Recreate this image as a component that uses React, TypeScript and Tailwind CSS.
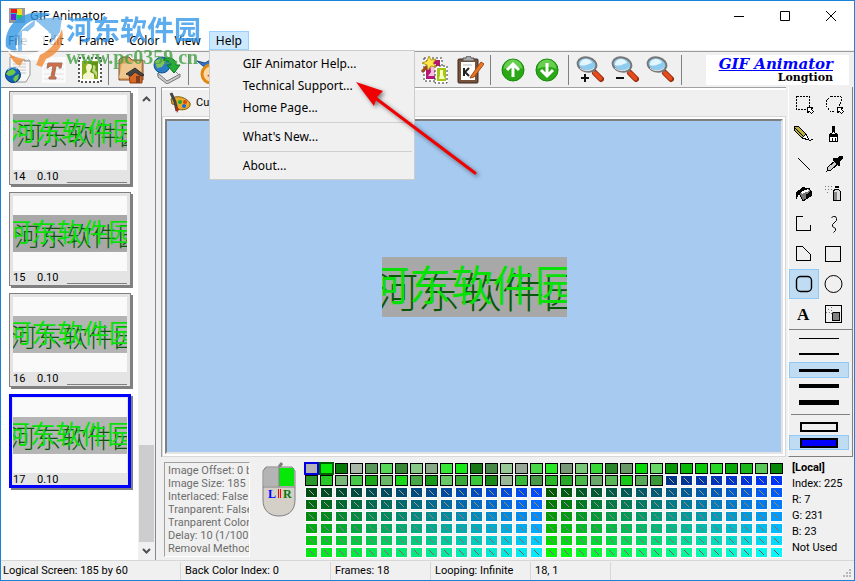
import type { ReactNode } from "react";

const UI = "font-['Noto_Sans','Noto_Sans_CJK_SC',sans-serif]";
const SMALL = "font-['Roboto',sans-serif] text-[11px]";

const frames = [
  { id: 14, green: -6, dark: 5, bg: "#a8a8a8" },
  { id: 15, green: -13, dark: 2, bg: "#a8a8a8" },
  { id: 16, green: -12, dark: -4, bg: "#b4b4b4" },
  { id: 17, green: -15, dark: -6, bg: "#b4b4b4" },
];

const info = [
  "Image Offset: 0 by 0",
  "Image Size: 185 by 60",
  "Interlaced: False",
  "Tranparent: False",
  "Tranparent Color: 0",
  "Delay: 10 (1/100 s)",
  "Removal Method: 0",
];

const usedColors = (
  "b4b4b4 08e808 087808 a8b8a8 589858 58d858 388838 88c888 88a888 38e838 18e818 187818 488848 98c898 98a898 48d848 " +
  "28e828 789878 78c878 38d838 288828 689868 08d808 68d868 089808 08b808 08c808 28d828 08a808 18b818 58c858 088808 " +
  "289828 28c828 78b878 48c848 18a818 68b868 18d818 48a848 189818 68c868 38a838 38c838 188818 98b898 38b838 489848 " +
  "28b828 28a828 48b848 68a868 58b858 18c818 58a858 389838"
).split(" ");

function swatch(i: number) {
  if (i < usedColors.length) {
    return { fill: "#" + usedColors[i], line: "" };
  }
  const row = Math.floor(i / 32);
  const col = i % 32;
  let g = 52;
  let b = 136 + (col - 24) * 17;
  if (row > 1) {
    g = 75 + (row - 2) * 32 + (col > 15 ? 16 : 0);
    b = col > 15 ? (col - 16) * 17 : 15 + col * 16;
  }
  g = Math.min(g, 255);
  return {
    fill: `rgb(0,${g},${b})`,
    line: `rgb(225,${255 - g},${255 - b})`,
  };
}

function FrameArt({ green, dark, bg }: { green: number; dark: number; bg: string }) {
  return (
    <svg viewBox="0 0 185 60" className="block w-full font-['Noto_Sans_CJK_SC',sans-serif]">
      <rect width="185" height="60" fill={bg} />
      <text x={dark} y="51" fontSize="42" fontWeight="300" fill="#085808">
        河东软件园
      </text>
      <text x={green} y="44" fontSize="42" fontWeight="400" fill="#08e008">
        河东软件园
      </text>
    </svg>
  );
}

function FrameCard({ frame }: { frame: (typeof frames)[number] }) {
  const selected = frame.id === 17;
  return (
    <button
      className={`relative block w-[122px] h-[94px] shrink-0 bg-[#e4e4e4] text-left shadow-[2px_2px_0_#808080] border ${
        selected ? "border-[#0000ff] outline-3 -outline-offset-3 outline-[#0000ff]" : "border-[#808080]"
      }`}
    >
      <div className="mx-[3px] mt-[3px] h-[75px] flex items-center bg-[#fafafa]">
        <FrameArt green={frame.green} dark={frame.dark} bg={frame.bg} />
      </div>
      <div className={`flex items-center px-[3px] h-[14px] leading-[14px] ${SMALL}`}>
        <span className="w-6">{frame.id}</span>
        <span className="w-[30px]">0.10</span>
        {!selected && <span className="flex-1 self-end mb-px border-b border-[#808080]" />}
      </div>
    </button>
  );
}

function Icon({ children, label }: { children: ReactNode; label: string }) {
  return (
    <button aria-label={label} className="shrink-0">
      <svg width="28" height="28" viewBox="0 0 28 28" fill="none">
        {children}
      </svg>
    </button>
  );
}

function Sep() {
  return <span className="w-px h-[30px] shrink-0 bg-[#808080]" />;
}

function Lens() {
  return (
    <>
      <path d="M19 17l6 6" stroke="#922a0c" strokeWidth="6" strokeLinecap="round" />
      <path d="M19 17l5.500 5.500" stroke="#e64a1d" strokeWidth="4" strokeLinecap="round" />
      <path d="M15 13l3 3" stroke="#777" strokeWidth="3" />
      <ellipse cx="11" cy="8.500" rx="9.500" ry="7" fill="#8dccef" stroke="#777" strokeWidth="2" transform="rotate(15 11 8.500)" />
      <path d="M4 9c0-7 10-8 12-2-3 0-6 4-12 2z" fill="#e3f6ff" />
      <path d="M4 12c3 3 10 4 14 0" stroke="#e7e7e7" />
    </>
  );
}

function Arrow({ down }: { down?: boolean }) {
  return (
    <>
      <circle cx="14" cy="14" r="11" fill="#2aa816" stroke="#168a0b" />
      <path d="M4.500 13a9.500 9.500 0 0 1 19 0c-5-3-13-3-19 0z" fill="#69ce50" />
      <path
        d={down ? "M14 7v13M8 14l6 6 6-6" : "M14 21V8M8 14l6-6 6 6"}
        stroke="#fff"
        strokeWidth="3"
      />
    </>
  );
}

function Toolbar() {
  return (
    <div className="flex items-center h-9 pl-[3px] pr-[5px] border-t border-[#9a9a9a] bg-[#f0f0f0] overflow-hidden">
      <div className="flex items-center gap-2 w-[104px] shrink-0">
        <Icon label="Open from web">
          <path d="M6 1h16l4 4v14l-4 7H6z" fill="#f8f8f8" stroke="#999" />
          <path d="M9 5h10M9 8h13M9 11h13M14 14h8M17 17h5" stroke="#c6c6c6" />
          <path d="M25 5h-5V1" fill="#ddd" stroke="#888" />
          <circle cx="9" cy="19" r="7.500" fill="#1763b5" stroke="#063d79" />
          <path d="M4 15l5-2 3 3-3 3-4 1-3-2zM11 20l4-2-1 5-3 3-2-3z" fill="#6ec84a" />
          <path d="M4 14c2-3 6-3 9-1" stroke="#a7dcff" />
        </Icon>
        <Icon label="Text">
          <rect x="2" y="1" width="24" height="26" fill="#fafafa" />
          <path d="M4 8h20M4 13h20M4 18h20M4 23h20" stroke="#e2e2e2" />
          <path d="M8 7h14l-1 5h-2v-2h-3l-2 11h2v2H9v-2h2l2-11h-3l-2 2H7z" fill="#d66c46" stroke="#a0705c" />
        </Icon>
        <Icon label="Image">
          <rect x="3" y="2" width="22" height="24" fill="#fff" stroke="#555" strokeWidth="2" strokeDasharray="2 2" />
          <rect x="4" y="3" width="20" height="22" fill="#fff" />
          <rect x="6" y="5" width="16" height="18" fill="#87ad1d" />
          <path d="M12 6h10v14H12z" fill="#5f9512" />
          <path d="M12 8c4-1 5 3 3 5l-1 3 4 2v5H7v-4l4-3-1-4c0-2 0-3 2-4z" fill="#f4f6cf" />
          <path d="M17 9c3 0 3 3 2 5l2 2v5l-3-4-2-2 1-3z" fill="#c6d982" />
        </Icon>
      </div>
      <Sep />
      <div className="flex items-center gap-2 px-2 w-[79px] shrink-0">
        <Icon label="Open">
          <path d="M2 24V4l3-3h7l3 3h11v20z" fill="#dfa160" stroke="#7d5129" />
          <path d="M5 8l19-3v17H2z" fill="#edc78d" />
          <path d="M12 18l6-5 9 6-2 2v6H13z" fill="#d86823" stroke="#8d3c18" />
          <path d="M9 18l9-6 9 7-3 1-6-4-4 4z" fill="#444" stroke="#333" />
          <path d="M19 20h4v7h-4z" fill="#81401d" />
        </Icon>
        <Icon label="Save">
          <path d="M5 17l13-6 9 9-13 7-9-7z" fill="#f0f0f0" stroke="#888" />
          <path d="M5 17v4l9 7 13-7v-3l-13 7z" stroke="#777" fill="#ccc" />
          <circle cx="9" cy="9" r="8" fill="#287bc4" stroke="#115493" />
          <path d="M2 5l6-3 5 3-4 6-5 1z" fill="#80c35a" />
          <path d="M11 3c6-3 12 0 12 6h4l-6 8-7-8h4c0-3-3-5-7-4z" fill="#25ae35" stroke="#08791c" />
        </Icon>
      </div>
      <Sep />
      <div className="px-2 flex-1 flex">
        <Icon label="Browser preview">
          <path d="M0 5l8 2 7-4-3 9-6-2z" fill="#3576c8" stroke="#154885" />
          <circle cx="14" cy="18" r="9" fill="#ffd9a3" stroke="#df8911" strokeWidth="3" />
          <path d="M10 20l9-7-5 8z" fill="#d33" />
        </Icon>
      </div>
      <div className="flex items-center gap-2 mr-[6px] shrink-0">
        <Icon label="Effects">
          <rect x="5" y="3" width="16" height="21" fill="#b31873" stroke="#fff" strokeWidth="2" />
          <rect x="4" y="2" width="18" height="23" stroke="#333" strokeDasharray="2 2" />
          <path d="M10 8h6v6l-2 2 4 4H8l3-4z" fill="#f4c1df" />
          <rect x="16" y="11" width="11" height="15" fill="#a5c714" stroke="#fff" strokeWidth="2" />
          <rect x="15" y="10" width="12" height="17" stroke="#333" strokeDasharray="2 2" />
          <path d="M20 14h3v5l2 4h-6l1-4z" fill="#f7ffc4" />
          <path d="M2 16l8-9" stroke="#9a4c17" strokeWidth="3" />
          <path d="M9 0l2 4 5-1-3 4 3 4-5-1-3 4-1-5-5-2 5-2z" fill="#ffe74e" stroke="#b49a16" />
        </Icon>
        <Icon label="Properties">
          <rect x="2" y="3" width="20" height="24" rx="1" fill="#775239" stroke="#3d2b22" />
          <path d="M5 6h14v18H5z" fill="#fff" />
          <path d="M7 5V2h3l1-2h3l1 2h3v3z" fill="#aaa" stroke="#555" />
          <path d="M7 9h9" stroke="#bbb" />
          <path d="M8 12v8M13 12l-4 4 4 4" stroke="#222" strokeWidth="2" />
          <path d="M15 20l10-14 3 2-10 13-4 1z" fill="#e97728" stroke="#a64815" />
        </Icon>
      </div>
      <Sep />
      <div className="flex items-center justify-center gap-[6px] w-[77px] shrink-0">
        <Icon label="Move up">
          <Arrow />
        </Icon>
        <Icon label="Move down">
          <Arrow down />
        </Icon>
      </div>
      <Sep />
      <div className="flex items-center gap-[7px] pl-[7px] w-[112px] shrink-0">
        <Icon label="Zoom in">
          <Lens />
          <path d="M5 22h8M9 18v8" stroke="#111" strokeWidth="2" />
        </Icon>
        <Icon label="Zoom out">
          <Lens />
          <path d="M5 22h8" stroke="#111" strokeWidth="2" />
        </Icon>
        <Icon label="Zoom">
          <Lens />
        </Icon>
      </div>
      <Sep />
      <div className="ml-6 w-[143px] h-[30px] shrink-0 bg-white pr-4 text-right font-['DejaVu_Serif',serif] font-bold">
        <a href="#home" className="block text-[15px] leading-[18px] italic underline text-[#0000ff] whitespace-nowrap">
          GIF Animator
        </a>
        <div className="text-[11px] leading-[10px]">Longtion</div>
      </div>
    </div>
  );
}

const tools: { name: string; art: ReactNode }[] = [
  {
    name: "Select",
    art: (
      <>
        <path d="M7.500 7.500h13v13h-13z" strokeDasharray="2 1" />
        <path d="M18.500 18.500h5l-1 2 2 2-2 2-2-2-2 1z" fill="#fff" />
      </>
    ),
  },
  {
    name: "Lasso",
    art: (
      <>
        <path d="M12 7h5l5 1v5l-2 4M12 7l-5 5v5l4 5 6 1" strokeDasharray="2 1" />
        <path d="M18.500 18.500h5l-1 2 2 2-2 2-2-2-2 1z" fill="#fff" />
      </>
    ),
  },
  {
    name: "Pencil",
    art: (
      <>
        <path d="M5 7l4 0 8 8-4 4-8-8z" fill="#b7af42" />
        <path d="M13 19l4-4 3 6z" fill="#fff" />
        <path d="M20 21h2l2-1M6 9l9 9" />
      </>
    ),
  },
  {
    name: "Brush",
    art: (
      <>
        <path d="M13.500 13.500v-6h2v6l3 2v7h-8v-7z" fill="#fff" />
        <path d="M11 15h7v2h-7z" fill="#000" />
        <path d="M13.500 19v3M16.500 19v3M14.500 7v6" />
      </>
    ),
  },
  { name: "Line", art: <path d="M9 9l12 12" strokeWidth="1.400" /> },
  {
    name: "Color picker",
    art: (
      <>
        <path d="M8 22l1-4 8-7 3 3-8 7z" fill="#ccc" />
        <path d="M15 9l4 1 2-3h2v3l-3 3v3h-1l-5-5z" fill="#000" />
      </>
    ),
  },
  {
    name: "Fill",
    art: (
      <>
        <path d="M12 12l8-3 3 7-9 6-4-8z" fill="#777" />
        <path d="M7 20v-6l4-3 3-3 4 2-8 4z" fill="#000" />
        <path d="M12 13l7-3 1 2-7 3z" fill="#fff" stroke="none" />
        <path d="M17 16l5-3v4l-5 3z" fill="#111" />
      </>
    ),
  },
  {
    name: "Spray",
    art: (
      <>
        <path d="M14.500 12.500l1-2h4l2 2v9h-7z" fill="#ddd" />
        <path d="M15 13h3v8h-3z" fill="#888" stroke="none" />
        <path d="M16 9V7h3v2" fill="#000" />
        <path d="M6 7h8M6 10h7M8 13h3" strokeDasharray="1 2" stroke="#777" />
      </>
    ),
  },
  { name: "Polyline", art: <path d="M14 7.500H7.500v14h14V16" /> },
  { name: "Curve", art: <path d="M12.500 8.500l2-1h2l1 2v2l-4 4v2l3 2v2l-2 2" shapeRendering="auto" /> },
  { name: "Polygon", art: <path d="M7.500 7.500h6l8 8v6h-14z" /> },
  { name: "Rectangle", art: <path d="M6.500 7.500h15v15h-15z" /> },
  { name: "Rounded rectangle", art: <rect x="7.500" y="7.500" width="15" height="15" rx="4" strokeWidth="1.400" shapeRendering="auto" /> },
  { name: "Ellipse", art: <circle cx="14.500" cy="15" r="8.500" shapeRendering="auto" /> },
  {
    name: "Text tool",
    art: (
      <text x="8" y="21" fontSize="17" fontWeight="bold" fill="#000" stroke="none" className="font-['Liberation_Serif',serif]">
        A
      </text>
    ),
  },
  {
    name: "Transparency",
    art: (
      <>
        <path d="M6.500 6.500h16v17h-16z" />
        <path d="M13.500 13.500h7v8h-7z" fill="#808080" />
        <path d="M7 13h7M12 8v7M9 10h2" stroke="#777" strokeDasharray="1 2" />
      </>
    ),
  },
];

const strokes = ["h-px", "h-[2px]", "h-[3px]", "h-1", "h-[5px]"];

function ToolPanel() {
  return (
    <div className="w-[65px] shrink-0 border-l border-white border-r border-r-[#808080] border-b border-b-[#808080] pt-[2px] flex flex-col">
      <div className="grid grid-cols-[30px_30px]">
        {tools.map((tool) => (
          <button
            key={tool.name}
            aria-label={tool.name}
            className={`h-[30px] ${
              tool.name === "Rounded rectangle" ? "bg-[#bfdcf3] outline outline-[#90c8f6] -outline-offset-1" : ""
            }`}
          >
            <svg width="30" height="30" viewBox="0 0 30 30" fill="none" stroke="#000" shapeRendering="crispEdges">
              {tool.art}
            </svg>
          </button>
        ))}
      </div>
      <div className="border-t border-[#808080]">
        {strokes.map((h, i) => (
          <button
            key={h}
            aria-label={`Line width ${i + 1}`}
            className={`flex w-[60px] h-4 items-center justify-center border ${
              i === 2 ? "bg-[#bfdcf3] border-[#90c8f6]" : "border-transparent"
            }`}
          >
            <span className={`w-10 bg-black ${h}`} />
          </button>
        ))}
      </div>
      <div className="mt-1 mx-[2px] border-t border-[#808080]" />
      <div className="pt-1">
        <button aria-label="Outline" className="flex w-[60px] h-4 items-center justify-center">
          <span className="w-[38px] h-[10px] border-2 border-black" />
        </button>
        <button aria-label="Filled" className="flex w-[60px] h-[15px] items-center justify-center bg-[#bfdcf3] border border-[#90c8f6]">
          <span className="w-[38px] h-[10px] border-2 border-black bg-[#0000ff]" />
        </button>
      </div>
    </div>
  );
}

function Palette() {
  return (
    <div className="grid grid-cols-[repeat(32,15px)] auto-rows-[12px] content-start shrink-0">
      {Array.from({ length: 256 }, (_, i) => {
        const c = swatch(i);
        let ring = c.line ? "border-white" : "border-black";
        if (i === 0) ring = "border-black outline-2 outline-[#0000e0]";
        if (i === 1) ring = "border-black outline-2 outline-[#006000]";
        return (
          <button
            key={i}
            aria-label={`Color ${i}`}
            className={`m-px h-[11px] w-[13px] border ${ring} ${i < 2 ? "z-10 -outline-offset-1" : ""}`}
            style={{ backgroundColor: c.fill }}
          >
            {c.line && (
              <svg className="block" width="11" height="9" viewBox="0 0 11 9">
                <path d="M3 2l5 5" stroke={c.line} strokeWidth="0.800" />
              </svg>
            )}
          </button>
        );
      })}
    </div>
  );
}

function Mouse() {
  return (
    <svg width="34" height="56" viewBox="0 0 34 56" className="shrink-0 font-['Liberation_Serif',serif]">
      <path d="M17 5l3-4" stroke="#808080" strokeWidth="3" />
      <path d="M4 5h26l3 4v29c0 11-7 16-16 16S1 49 1 38V9z" fill="#d4d0c8" />
      <path d="M2 6h15v18H2z" fill="#b4b4b4" />
      <path d="M17 6h15v18H17z" fill="#08e808" />
      <path d="M4 5h26l3 4v29c0 11-7 16-16 16S1 49 1 38V9zM1 25h32M17 5v20" fill="none" stroke="#808080" />
      <text x="6" y="36" fontSize="12" fontWeight="bold" fill="#0000ff">L</text>
      <path d="M16.500 27v9M18.500 27v9" stroke="#f00" />
      <text x="21" y="36" fontSize="12" fontWeight="bold" fill="#087808">R</text>
    </svg>
  );
}

function HelpMenu() {
  const item = "block w-full h-[22px] pl-[33px] text-left leading-[22px] whitespace-nowrap";
  const line = <div className="h-[7px] pt-[3px] pl-[30px] pr-[2px]"><div className="border-t border-[#d0d0d0]" /></div>;
  return (
    <div className="absolute z-20 left-0 top-full w-[206px] py-[2px] bg-[#f0f0f0] border border-[#cccccc]">
      <button className={item}>GIF Animator Help...</button>
      <button className={item}>Technical Support...</button>
      <button className={item}>Home Page...</button>
      {line}
      <button className={item}>What's New...</button>
      {line}
      <button className={item}>About...</button>
    </div>
  );
}

function Watermark() {
  return (
    <div className="absolute z-10 left-1 top-[10px] flex items-start opacity-80 pointer-events-none">
      <svg width="58" height="58" viewBox="0 0 58 58">
        <path d="M2 38c14 12 36 6 51-16l4-3c1 16-8 27-20 31L19 48C10 47 4 43 2 38z" fill="#fff" />
        <path d="M1 36C-2 14 18-4 46 3L30 9C20 11 13 20 12 31l-2 8z" fill="#3498e5" />
        <path d="M2 37c3 2 7 3 10 2l-2-4c0-6 2-10 3-14z" fill="#3498e5" />
        <path d="M13 22l18-14 26-2-2 15-9 11V23l-3-2-10-9-11 9v18l-9 1z" fill="#70b3ea" />
        <path d="M17 20h5v20h-5zM30 9l14 12h-4v11l-7 5V23h-4z" fill="#fff" />
        <path d="M4 42c4 4 10 5 15 6l-4 7C10 53 6 48 4 42z" fill="#f28a36" />
        <path d="M57 18c3 14-3 25-16 30l-4 8-6-2 4-10c9-4 17-12 22-26z" fill="#f28a36" />
      </svg>
      <div className="pl-[3px]">
        <div className="text-[27px] leading-[36px] font-bold text-[#3498eb] font-['Noto_Sans_CJK_SC',sans-serif]">
          河东软件园
        </div>
        <div className="text-[20px] leading-[20px] font-bold text-[#46a046] font-['Liberation_Serif',serif]">
          www.pc0359.cn
        </div>
      </div>
    </div>
  );
}

export default function App() {
  return (
    <div className={`relative flex flex-col min-h-screen border border-[#1883d7] bg-[#f0f0f0] text-black text-[12px] ${UI}`}>
      <header className="flex items-center h-[30px] bg-white pl-2">
        <svg width="16" height="16" viewBox="0 0 16 16">
          <path d="M0 0h16v15H0z" fill="#999" />
          <path d="M2 1h11v11H2z" fill="#10b9e5" />
          <path d="M2 1h6v4H2z" fill="#ef1717" />
          <path d="M8 1h5v6H8z" fill="#f0dc20" />
          <path d="M2 6h5v6H2z" fill="#6127dc" />
          <path d="M8 7h5v5H8z" fill="#24ca42" />
        </svg>
        <h1 className="ml-[5px] flex-1">GIF Animator</h1>
        <button aria-label="Minimize" className="w-[46px] flex justify-center">
          <svg width="10" height="10" stroke="#000"><path d="M0 5.500h10" /></svg>
        </button>
        <button aria-label="Maximize" className="w-[46px] flex justify-center">
          <svg width="10" height="10" fill="none" stroke="#000"><path d="M.5.5h9v9h-9z" /></svg>
        </button>
        <button aria-label="Close" className="w-[46px] flex justify-center">
          <svg width="10" height="10" stroke="#000"><path d="M0 0l10 10M10 0L0 10" /></svg>
        </button>
      </header>

      <nav className="flex gap-px h-5 bg-white border-b border-[#f0f0f0]">
        {["File", "Edit", "Frame", "Color", "View"].map((name) => (
          <button key={name} className="px-[7px]">
            {name}
          </button>
        ))}
        <div className="relative">
          <button className="h-[19px] px-[6px] leading-[17px] bg-[#cce8ff] border border-[#99d1ff]">Help</button>
          <HelpMenu />
        </div>
      </nav>

      <Toolbar />

      <main className="flex flex-1">
        <aside className="flex w-[155px] shrink-0 bg-white border-t border-r border-[#828790]">
          <div className="flex flex-col gap-[7px] flex-1 pl-2 pt-[3px]">
            {frames.map((frame) => (
              <FrameCard key={frame.id} frame={frame} />
            ))}
          </div>
          <div className="flex flex-col items-center w-[17px] bg-[#f0f0f0] pt-2 pb-[6px]">
            <svg width="9" height="6" fill="none" stroke="#505050" strokeWidth="2"><path d="M1 5l3.500-3.500L8 5" /></svg>
            <div className="flex-1" />
            <div className="w-[15px] h-[97px] bg-[#cdcdcd] mb-[6px]" />
            <svg width="9" height="6" fill="none" stroke="#505050" strokeWidth="2"><path d="M1 1l3.500 3.500L8 1" /></svg>
          </div>
        </aside>

        <div className="flex flex-col flex-1 min-w-0 pl-[5px] pr-px">
          <div className="flex flex-1">
            <section className="flex flex-col flex-1 min-w-0 mr-[2px] border-t border-l border-[#a0a0a0]">
              <div className="flex items-center h-7 pl-[6px] border-t-2 border-white">
                <button className={`flex items-center gap-1 whitespace-nowrap ${SMALL}`}>
                  <svg width="24" height="22" viewBox="0 0 24 22">
                    <path d="M3 7c6-5 16-1 19 4 2 6-9 9-14 5l1-3-5-1z" fill="#e5ac28" stroke="#815b12" />
                    <path d="M3 1l4 9 2 9" stroke="#444" strokeWidth="3" />
                    <path d="M7 13l4 4-2 4z" fill="#b32612" />
                    <circle cx="12" cy="10" r="2" fill="#18a92a" />
                    <circle cx="17" cy="10" r="2" fill="#e34418" />
                    <circle cx="16" cy="14" r="2" fill="#2266d8" />
                  </svg>
                  Current Frame
                </button>
              </div>
              <div className="flex-1 flex border border-[#d8d8d8] p-[2px] bg-white">
                <div className="flex-1 flex items-center justify-center bg-[#a6caf0] border-2 border-[#808080] border-r-[#e3e3e3] border-b-[#e3e3e3]">
                  <div className="w-[185px]">
                    <FrameArt green={-15} dark={-6} bg="#a8a8a8" />
                  </div>
                </div>
              </div>
            </section>
            <ToolPanel />
          </div>

          <div className="flex pt-[5px] pb-[2px] pl-[3px]">
            <div className={`w-[86px] h-[95px] shrink-0 overflow-hidden border-l border-t border-[#a0a0a0] border-r border-b border-r-white border-b-white pl-[3px] pt-px leading-[13px] whitespace-nowrap text-[#6d6d6d] ${SMALL}`}>
              {info.map((line) => (
                <div key={line}>{line}</div>
              ))}
            </div>
            <div className="w-[54px] flex justify-end pr-2 shrink-0">
              <Mouse />
            </div>
            <Palette />
            <div className={`flex-1 pl-2 -mt-[2px] leading-4 whitespace-nowrap ${SMALL}`}>
              <div className="font-bold">[Local]</div>
              <div>Index: 225</div>
              <div>R: 7</div>
              <div>G: 231</div>
              <div>B: 23</div>
              <div>Not Used</div>
            </div>
          </div>
        </div>
      </main>

      <footer className={`flex items-center h-5 border-t border-[#d7d7d7] pl-[2px] leading-[18px] ${SMALL}`}>
        <span className="w-[178px] border-r border-[#d7d7d7]">Logical Screen: 185 by 60</span>
        <span className="w-[150px] pl-1 border-r border-[#d7d7d7]">Back Color Index: 0</span>
        <span className="w-[100px] pl-1 border-r border-[#d7d7d7]">Frames: 18</span>
        <span className="w-[100px] pl-1 border-r border-[#d7d7d7]">Looping: Infinite</span>
        <span className="w-[80px] pl-1 border-r border-[#d7d7d7]">18, 1</span>
        <svg className="ml-auto self-end m-[2px]" width="9" height="9" fill="#b8b8b8">
          <path d="M6 0h2v2H6zM3 3h2v2H3zM6 3h2v2H6zM0 6h2v2H0zM3 6h2v2H3zM6 6h2v2H6z" />
        </svg>
      </footer>

      <Watermark />
      <svg
        className="absolute z-30 left-[349px] top-[75px] pointer-events-none drop-shadow-[2px_2px_2px_rgba(0,0,0,0.5)]"
        width="132"
        height="104"
        viewBox="0 0 132 104"
      >
        <path d="M24 21l101 76" stroke="#f00000" strokeWidth="3" strokeLinecap="round" />
        <path d="M6 6l27 9-6 6-3 9z" fill="#f00000" />
      </svg>
    </div>
  );
}
